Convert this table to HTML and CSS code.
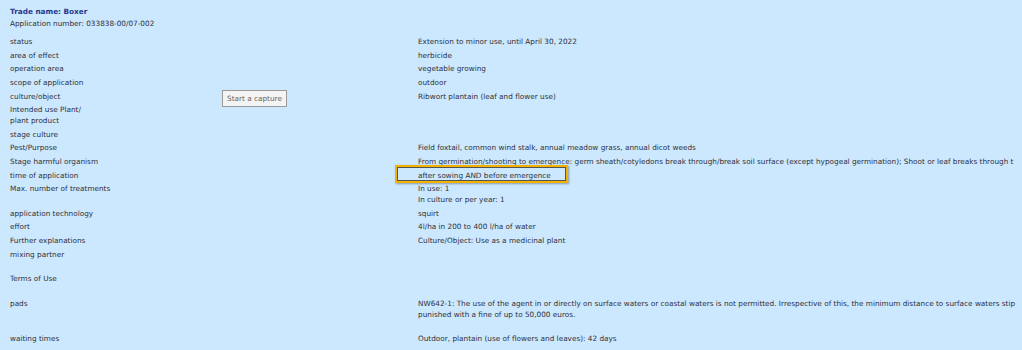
FILE: index.html
```html
<!DOCTYPE html>
<html>
<head>
<meta charset="utf-8">
<link rel="stylesheet" href="styles.css">
</head>
<body>
<div class="page">
  <div class="head">
    <div class="title">Trade name: Boxer</div>
    <div class="appno">Application number: 033838-00/07-002</div>
  </div>
  <div class="table">
    <div class="row"><div class="lbl">status</div><div class="val">Extension to minor use, until April 30, 2022</div></div>
    <div class="row"><div class="lbl">area of effect</div><div class="val">herbicide</div></div>
    <div class="row"><div class="lbl">operation area</div><div class="val">vegetable growing</div></div>
    <div class="row"><div class="lbl">scope of application</div><div class="val">outdoor</div></div>
    <div class="row"><div class="lbl">culture/object</div><div class="val">Ribwort plantain (leaf and flower use)</div></div>
    <div class="row"><div class="lbl">Intended use Plant/<br>plant product</div><div class="val"></div></div>
    <div class="row"><div class="lbl">stage culture</div><div class="val"></div></div>
    <div class="row"><div class="lbl">Pest/Purpose</div><div class="val">Field foxtail, common wind stalk, annual meadow grass, annual dicot weeds</div></div>
    <div class="row"><div class="lbl">Stage harmful organism</div><div class="val clip">From germination/shooting to emergence: germ sheath/cotyledons break through/break soil surface (except hypogeal germination); Shoot or leaf breaks through t</div></div>
    <div class="row"><div class="lbl">time of application</div><div class="val"><span class="hl">after sowing AND before emergence</span></div></div>
    <div class="row"><div class="lbl">Max. number of treatments</div><div class="val">In use: 1<br>In culture or per year: 1</div></div>
    <div class="row"><div class="lbl">application technology</div><div class="val">squirt</div></div>
    <div class="row"><div class="lbl">effort</div><div class="val">4l/ha in 200 to 400 l/ha of water</div></div>
    <div class="row"><div class="lbl">Further explanations</div><div class="val">Culture/Object: Use as a medicinal plant</div></div>
    <div class="row"><div class="lbl">mixing partner</div><div class="val"><br>&nbsp;</div></div>
    <div class="row"><div class="lbl">Terms of Use</div><div class="val"><br>&nbsp;</div></div>
    <div class="row"><div class="lbl">pads</div><div class="val clip">NW642-1: The use of the agent in or directly on surface waters or coastal waters is not permitted. Irrespective of this, the minimum distance to surface waters stip<br>punished with a fine of up to 50,000 euros.<br>&nbsp;</div></div>
    <div class="row"><div class="lbl">waiting times</div><div class="val">Outdoor, plantain (use of flowers and leaves): 42 days</div></div>
  </div>
  <div class="tip">Start a capture</div>
</div>
</body>
</html>
```
FILE: styles.css
```css
html, body {
  margin: 0;
  padding: 0;
  background: #cce8fe;
  overflow: hidden;
}
body {
  width: 1022px;
  height: 350px;
  font-family: "DejaVu Sans", Verdana, sans-serif;
  font-size: 7.3px;
  color: #30303a;
}
.page {
  position: relative;
  padding: 6px 0 0 10px;
}
.head {
  line-height: 12px;
  margin-bottom: 5px;
}
.title {
  font-weight: bold;
  color: #1f3a8f;
}
.table {
  display: flex;
  flex-direction: column;
}
.row {
  display: grid;
  grid-template-columns: 408px 1fr;
  line-height: 11px;
  padding: 1.3px 0;
}
.val {
  white-space: nowrap;
  min-width: 0;
}
.clip {
  overflow: hidden;
}
.hl {
  position: relative;
}
.hl::before {
  content: "";
  position: absolute;
  left: -23px;
  top: -6px;
  width: 169px;
  height: 14px;
  border: 2px solid #f2b200;
  box-shadow: inset 0 0 0 1px #555, 1px 1px 2px rgba(0,0,0,0.35);
}
.tip {
  position: absolute;
  left: 222px;
  top: 90px;
  padding: 2px 4px;
  background: #f4f4f4;
  border: 1px solid #9a9a9a;
  color: #666;
  line-height: 11px;
}
```
